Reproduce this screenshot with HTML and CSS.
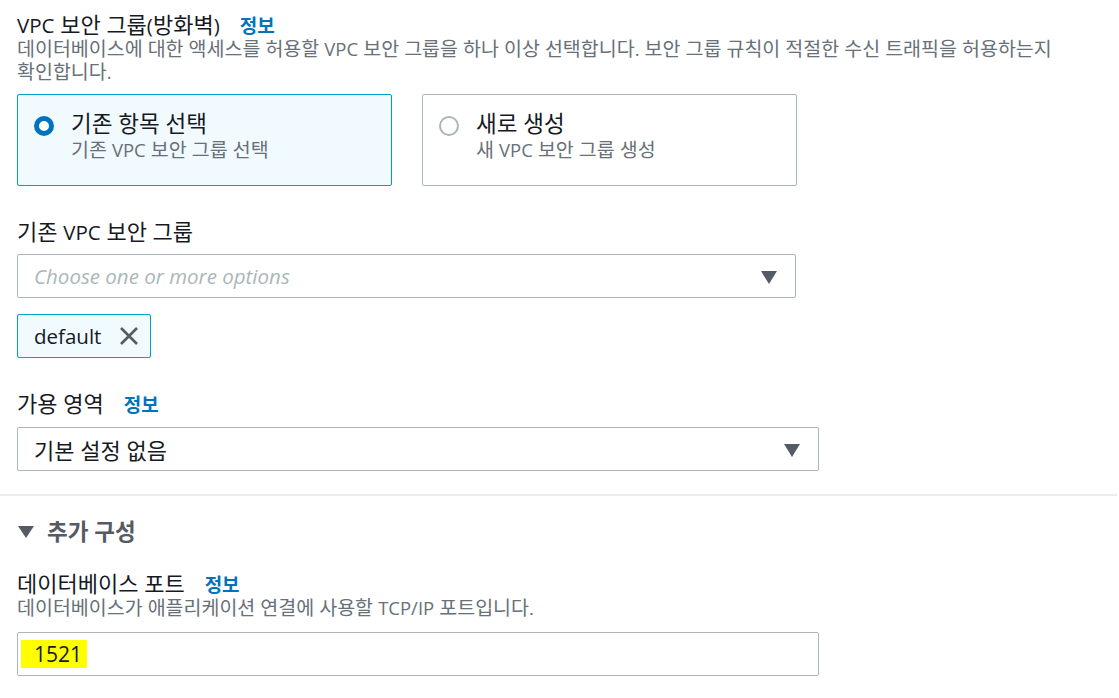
FILE: index.html
```html
<!DOCTYPE html>
<html lang="ko">
<head>
<meta charset="utf-8">
<link rel="stylesheet" href="styles.css">
</head>
<body>
<div class="page">
  <div class="field first">
    <div class="label"><span class="en">VPC</span> 보안 그룹<span class="en">(</span>방화벽<span class="en">)</span><a class="info">정보</a></div>
    <div class="desc">데이터베이스에 대한 액세스를 허용할 <span class="en">VPC</span> 보안 그룹을 하나 이상 선택합니다<span class="en">.</span> 보안 그룹 규칙이 적절한 수신 트래픽을 허용하는지 확인합니다<span class="en">.</span></div>
    <div class="tiles">
      <div class="tile selected">
        <span class="radio on"></span>
        <div class="tile-text">
          <div class="tile-title">기존 항목 선택</div>
          <div class="tile-sub">기존 <span class="en">VPC</span> 보안 그룹 선택</div>
        </div>
      </div>
      <div class="tile">
        <span class="radio"></span>
        <div class="tile-text">
          <div class="tile-title">새로 생성</div>
          <div class="tile-sub">새 <span class="en">VPC</span> 보안 그룹 생성</div>
        </div>
      </div>
    </div>
  </div>

  <div class="field sg">
    <div class="label">기존 <span class="en">VPC</span> 보안 그룹</div>
    <div class="select narrow">
      <span class="placeholder">Choose one or more options</span>
      <span class="caret"></span>
    </div>
    <div class="token">
      <span>default</span>
      <svg class="x" width="22" height="22" viewBox="0 0 22 22"><path d="M3 3 L19 19 M19 3 L3 19" stroke="#545b64" stroke-width="2.6" fill="none"/></svg>
    </div>
  </div>

  <div class="field az">
    <div class="label">가용 영역<a class="info">정보</a></div>
    <div class="select wide">
      <span class="value">기본 설정 없음</span>
      <span class="caret"></span>
    </div>
  </div>
</div>

<hr class="divider">

<div class="page">
  <div class="expander"><span class="exp-caret"></span><span>추가 구성</span></div>
  <div class="field port">
    <div class="label">데이터베이스 포트<a class="info">정보</a></div>
    <div class="desc">데이터베이스가 애플리케이션 연결에 사용할 <span class="en">TCP/IP</span> 포트입니다<span class="en">.</span></div>
    <div class="input wide"><span class="hl">1521</span></div>
  </div>
</div>
</body>
</html>
```

FILE: styles.css
```css
* { box-sizing: border-box; }
html, body { margin: 0; padding: 0; background: #fff; }
body {
  font-family: "Open Sans", "Noto Sans CJK KR", sans-serif;
  color: #16191f;
  overflow: hidden;
}
.page { padding: 0 0 0 17px; }
.field.first { padding-top: 11px; }
.en { line-height: 1; }
.label {
  font-size: 22px;
  line-height: 26px;
  height: 26px;
  color: #16191f;
  white-space: nowrap;
}
.label .en { font-size: 20.5px; }
.info {
  color: #0073bb;
  font-weight: 700;
  font-size: 19px;
  line-height: 1;
  margin-left: 20px;
}
.desc {
  font-size: 19.5px;
  line-height: 23px;
  color: #687078;
  width: 1050px;
}
.desc .en, .tile-sub .en { font-size: 18.5px; }
.tiles {
  display: flex;
  gap: 30px;
  margin-top: 11px;
}
.tile {
  width: 375px;
  height: 92px;
  border: 1px solid #aab7b8;
  border-radius: 2px;
  display: flex;
  align-items: flex-start;
  padding: 15px 16px;
  gap: 17px;
}
.tile.selected {
  border-color: #00a1c9;
  background: #f1faff;
}
.radio {
  flex: none;
  width: 20px;
  height: 20px;
  border-radius: 50%;
  border: 2px solid #aab7b8;
  margin-top: 6px;
  background: #fff;
}
.radio.on {
  border: 5px solid #0073bb;
}
.tile-title { font-size: 22.5px; line-height: 28px; color: #16191f; white-space: nowrap; }
.tile-sub { font-size: 19.5px; line-height: 23px; color: #687078; white-space: nowrap; }

.field.sg { margin-top: 32px; }
.select, .input {
  height: 44px;
  border: 1px solid #aab7b8;
  border-radius: 2px;
  display: flex;
  align-items: center;
  justify-content: space-between;
  padding: 0 18px 0 16px;
  background: #fff;
}
.select.narrow { width: 779px; margin-top: 10px; }
.wide { width: 802px; }
.placeholder {
  font-style: italic;
  color: #aab7b8;
  font-size: 20.5px;
}
.value { font-size: 22px; color: #16191f; }
.caret {
  width: 0; height: 0;
  border-left: 8px solid transparent;
  border-right: 8px solid transparent;
  border-top: 13px solid #545b64;
  margin-top: 2px;
}
.token {
  margin-top: 16px;
  width: 134px;
  height: 44px;
  border: 1px solid #00a1c9;
  border-radius: 2px;
  background: #f1faff;
  display: flex;
  align-items: center;
  padding: 0 10px 0 16px;
  justify-content: space-between;
  font-size: 20.5px;
}
.x { display: block; }

.field.az { margin-top: 32px; }
.select.wide { margin-top: 11px; }

.divider {
  border: 0;
  border-top: 2px solid #eaeded;
  margin: 23px 0 0 0;
  width: 1117px;
}
.expander {
  margin-top: 22px;
  display: flex;
  align-items: center;
  gap: 13px;
  font-size: 22.5px;
  font-weight: 700;
  color: #545b64;
  line-height: 28px;
}
.exp-caret {
  width: 0; height: 0;
  border-left: 8px solid transparent;
  border-right: 8px solid transparent;
  border-top: 12px solid #545b64;
  margin-left: 1px;
}
.field.port { margin-top: 24px; }
.desc + .input.wide { margin-top: 13px; }
.input.wide { justify-content: flex-start; padding-left: 3px; }
.hl {
  background: #ffff00;
  font-size: 21px;
  padding: 0 5px 0 13px;
  line-height: 28px;
}
```
